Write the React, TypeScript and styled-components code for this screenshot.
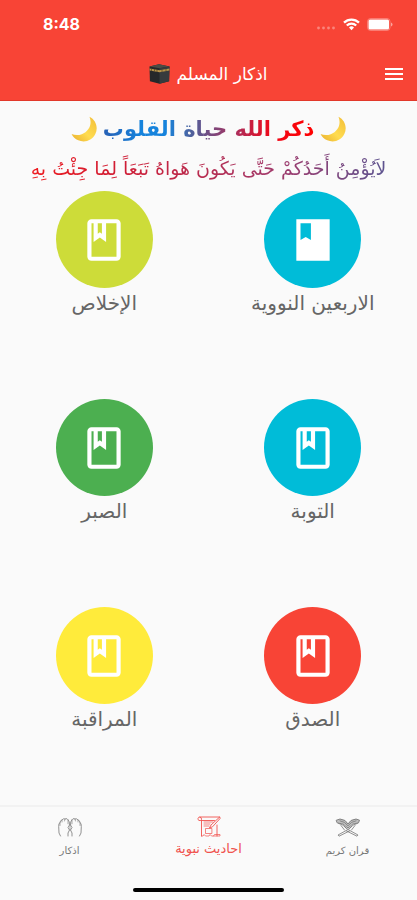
import React from 'react';
import styled, { createGlobalStyle } from 'styled-components';

const GlobalStyle = createGlobalStyle`
  *, *::before, *::after { box-sizing: border-box; }
  body {
    margin: 0;
    background: #fafafa;
    font-family: "DejaVu Sans", sans-serif;
  }
`;

const Screen = styled.div`
  display: flex;
  flex-direction: column;
  min-height: 100vh;
  background: #fafafa;
`;

const Header = styled.header`
  background: #f84436;
  border-bottom: 1px solid #e2382a;
  color: #fff;
`;

const StatusBar = styled.div`
  display: flex;
  align-items: center;
  justify-content: space-between;
  height: 48px;
  padding: 0 24px 0 43px;
`;

const Clock = styled.time`
  font: 700 16px/24px Inter, sans-serif;
`;

const StatusIcons = styled.div`
  display: flex;
  align-items: center;
  gap: 7px;
`;

const AppBar = styled.div`
  display: grid;
  grid-template-columns: 46px 1fr 46px;
  align-items: center;
  height: 52px;
`;

const AppTitle = styled.h1`
  grid-column: 2;
  display: flex;
  align-items: center;
  justify-content: center;
  gap: 6px;
  margin: 0;
  font-size: 17px;
  font-weight: 400;
  line-height: 28px;
  white-space: nowrap;
`;

const MenuButton = styled.button`
  display: grid;
  place-items: center;
  height: 48px;
  padding: 0;
  border: 0;
  background: none;
  color: inherit;
  cursor: pointer;
`;

const Content = styled.main`
  flex: 1;
  display: flex;
  flex-direction: column;
`;

const Slogan = styled.h2`
  display: flex;
  align-items: center;
  justify-content: center;
  gap: 6px;
  margin: 0;
  padding-top: 8px;
  font-size: 21px;
  line-height: 40px;
  white-space: nowrap;
`;

const GradientText = styled.span<{ $stops: string }>`
  display: inline-block;
  background: linear-gradient(to left, ${(p) => p.$stops});
  -webkit-background-clip: text;
  background-clip: text;
  color: transparent;
`;

const Verse = styled.p`
  display: flex;
  justify-content: center;
  margin: 0 0 4px;
  font-size: 19px;
  line-height: 38px;
  white-space: nowrap;
`;

const TopicGrid = styled.section`
  display: grid;
  grid-template-columns: 1fr 1fr;
  row-gap: 81px;
`;

const Topic = styled.button`
  display: flex;
  flex-direction: column;
  align-items: center;
  padding: 0;
  border: 0;
  background: none;
  color: #666;
  font: 400 20px/30px "DejaVu Sans", sans-serif;
  cursor: pointer;
`;

const Disc = styled.span<{ $color: string }>`
  display: grid;
  place-items: center;
  width: 97px;
  height: 97px;
  border-radius: 50%;
  background: ${(p) => p.$color};
  color: #fff;
`;

const BottomNav = styled.nav`
  display: grid;
  grid-template-columns: repeat(3, 1fr);
  height: 73px;
  border-top: 2px solid #f2f2f2;
`;

const Tab = styled.a<{ $active?: boolean }>`
  display: flex;
  flex-direction: column;
  align-items: center;
  padding-top: 8px;
  color: ${(p) => (p.$active ? '#f0524e' : '#777')};
  font-size: ${(p) => (p.$active ? 13 : 10)}px;
  line-height: 20px;
  text-decoration: none;
  white-space: nowrap;
`;

const HomeArea = styled.footer`
  display: flex;
  justify-content: center;
  height: 22px;
  padding-top: 10px;
`;

const HomeIndicator = styled.div`
  width: 36%;
  height: 4px;
  border-radius: 2px;
  background: #000;
`;

const Signal = () => (
  <svg width="20" height="14" viewBox="0 0 20 14" fill="#fff" opacity="0.35" aria-hidden="true">
    <circle cx="2.5" cy="11" r="1.4" />
    <circle cx="7.5" cy="11" r="1.4" />
    <circle cx="12.5" cy="11" r="1.4" />
    <circle cx="17.5" cy="11" r="1.4" />
  </svg>
);

const Wifi = () => (
  <svg width="17" height="13" viewBox="0 0 17 13" fill="none" stroke="#fff" strokeWidth="2.3" aria-hidden="true">
    <path d="M1 4.6a10.8 10.8 0 0 1 15 0" />
    <path d="M3.8 7.5a6.8 6.8 0 0 1 9.4 0" />
    <path d="M6 9.5a3.7 3.7 0 0 1 5 0L8.5 12.2z" fill="#fff" stroke="none" />
  </svg>
);

const Battery = () => (
  <svg width="26" height="13" viewBox="0 0 26 13" aria-hidden="true">
    <rect x="0.5" y="0.5" width="22.5" height="12" rx="3" fill="none" stroke="#fff" opacity="0.3" />
    <rect x="1.5" y="1.5" width="20.5" height="10" rx="1.5" fill="#fff" />
    <path d="M24 4.5q1.5.5 1.5 2t-1.5 2z" fill="#fff" opacity="0.5" />
  </svg>
);

const Kaaba = () => (
  <svg width="21" height="20" viewBox="0 0 21 20" aria-hidden="true">
    <path d="M.5 2.6L10 .3l10.500 2.300-.4 14.600-9.600 2.500L.9 17.200z" fill="#25282a" />
    <path d="M.5 2.6L10 .3l10.500 2.300-10 1.600z" fill="#4b4d45" />
    <path d="M10.500 4.200l10-1.600-.4 14.600-9.600 2.500z" fill="#373b3d" />
    <path d="M.6 4.600l9.900 1.600 9.900-1.600v1.900l-9.900 1.700L.6 6.500z" fill="#b8954a" />
    <path d="M2.500 4.500V7M5.500 5v2.500M8 5.500V8M13 5.500V8M17 4.700v2.500" stroke="#514226" strokeWidth=".7" />
  </svg>
);

const Menu = () => (
  <svg width="18" height="12" viewBox="0 0 18 12" fill="#fff" aria-hidden="true">
    <path d="M0 0h18v2H0zM0 5h18v2H0zM0 10h18v2H0z" />
  </svg>
);

const Moon = () => (
  <svg width="26" height="26" viewBox="0 0 26 26" aria-hidden="true">
    <defs>
      <linearGradient id="moonFill" x1="0" y1="1" x2="1" y2="0">
        <stop offset="0" stopColor="#e9ae2c" />
        <stop offset=".45" stopColor="#ffdc50" />
        <stop offset="1" stopColor="#f2bd37" />
      </linearGradient>
    </defs>
    <path
      d="M18.500.7C25 4 27.500 11.500 24.300 18 21 24.700 13.500 27 7.300 24.300 4.200 23 1.800 20.700.6 18c3 1.200 6.500 1.600 10.200.2C18 15.500 21.500 8 18.500.7z"
      fill="url(#moonFill)"
    />
  </svg>
);

const BOOK_OUTLINE =
  'M18 2H6c-1.1 0-2 .9-2 2v16c0 1.1.9 2 2 2h12c1.1 0 2-.9 2-2V4c0-1.1-.9-2-2-2zM9 4h2v5l-1-.75L9 9V4zm9 16H6V4h1v9l3-2.25L13 13V4h5v16z';
const BOOK_SOLID = 'M20 2H4v20h16V2zM6 4h5v8l-2.5-1.5L6 12V4z';

const Book = ({ solid }: { solid?: boolean }) => (
  <svg width="50" height="50" viewBox="0 0 24 24" fill="currentColor" aria-hidden="true">
    <path d={solid ? BOOK_SOLID : BOOK_OUTLINE} />
  </svg>
);

const Hands = () => (
  <svg width="26" height="26" viewBox="0 0 26 26" fill="none" stroke="currentColor" strokeWidth="0.8" strokeLinecap="round" strokeLinejoin="round" aria-hidden="true">
    <path d="M3.500 21L2 18l-.3-6.500Q1.500 8.500 3 7.500 3.300 5.300 5 5q1.300-1.800 3-1 2.300-1 3 .8 1.800 1.700 1.500 5.200l-1.500 2.500 1.500 2.500-1.500 3V21" />
    <path d="M22.500 21l1.500-3 .3-6.500q.2-3-1.300-4Q22.700 5.300 21 5q-1.300-1.800-3-1-2.300-1-3 .8-1.800 1.700-1.500 5.200l1.500 2.500-1.500 2.500 1.500 3V21" />
    <path d="M3 7.500v3M5 5v2M8 4l-.5 2M11 4.800v4M23 7.500v3M21 5v2M18 4l.5 2M15 4.800v4M13 10v5" strokeWidth="0.6" />
  </svg>
);

const Scroll = () => (
  <svg width="24" height="24" viewBox="0 0 24 24" fill="none" stroke="currentColor" strokeWidth="0.9" strokeLinecap="round" strokeLinejoin="round" aria-hidden="true">
    <path d="M3.500 5.500H2Q.8 5 1 3.500 1.300 2 3 2h19.500M3 2q1.800.5 1.500 2.300V21M4.500 5.500h13M20 10v11" />
    <path d="M22.500 2.200L14 10l-1.500 3 3-1.200 7.300-8z" />
    <path d="M7 7h9M7 9h6M7 11h5M14.500 13.500h-6v5h6zM4.500 21H6l1-1.500L8.500 21H12l1-1.500 1.500 1.500H23v-1.500h-5.500l-1 1.500" strokeWidth="0.7" />
  </svg>
);

const Quran = () => (
  <svg width="26" height="26" viewBox="0 0 26 26" fill="none" stroke="currentColor" strokeLinecap="round" strokeLinejoin="round" aria-hidden="true">
    <path d="M1.500 5.200L5 4q6 .5 8 5 2-4.500 8-5l3.500 1.200-1 2.600q-6-.2-10.500 5.200Q8.500 7.600 2.500 7.800z" fill="currentColor" fillOpacity=".45" strokeWidth="0.9" />
    <path d="M3.500 8.300q5 1 8 5.200M22.500 8.300q-5 1-8 5.200M5 5.800q5 .7 8 5 3-4.300 8-5" strokeWidth=".8" />
    <path d="M9.500 11.500l3.500 3 10 5.500-1 1.200L11.500 16M16.500 11.500l-3.500 3L3 20l1 1.200L14.500 16" strokeWidth="0.8" />
    <path d="M6 10.500l3.500 4.500M20 10.500L16.500 15" strokeWidth=".8" />
  </svg>
);

const topics = [
  { label: 'الاربعين النووية', color: '#00bcd8', solid: true },
  { label: 'الإخلاص', color: '#cddc39' },
  { label: 'التوبة', color: '#00bcd8' },
  { label: 'الصبر', color: '#4caf50' },
  { label: 'الصدق', color: '#f84436' },
  { label: 'المراقبة', color: '#ffeb3b' },
];

const tabs = [
  { label: 'قران كريم', icon: <Quran /> },
  { label: 'احاديث نبوية', icon: <Scroll />, active: true },
  { label: 'اذكار', icon: <Hands /> },
];

export default function App() {
  return (
    <Screen dir="rtl" lang="ar">
      <GlobalStyle />
      <Header>
        <StatusBar dir="ltr">
          <Clock>8:48</Clock>
          <StatusIcons>
            <Signal />
            <Wifi />
            <Battery />
          </StatusIcons>
        </StatusBar>
        <AppBar>
          <MenuButton type="button" aria-label="القائمة">
            <Menu />
          </MenuButton>
          <AppTitle>
            <span>اذكار المسلم</span>
            <Kaaba />
          </AppTitle>
        </AppBar>
      </Header>
      <Content>
        <Slogan>
          <Moon />
          <GradientText $stops="#ff0000 0%, #f00818 20%, #b02c58 36%, #4f609c 58%, #1683dc 70%, #1683dc 82%, #2860b4 100%">
            ذكر الله حياة القلوب
          </GradientText>
          <Moon />
        </Slogan>
        <Verse>
          <GradientText $stops="#5d5490 0%, #a03a6c 30%, #b82c50 52%, #d01c34 75%, #ee1c20 100%">
            لاَيُؤْمِنُ أَحَدُكُمْ حَتَّى يَكُونَ هَواهُ تَبَعَاً لِمَا جِئْتُ بِهِ
          </GradientText>
        </Verse>
        <TopicGrid>
          {topics.map((topic) => (
            <Topic type="button" key={topic.label}>
              <Disc $color={topic.color}>
                <Book solid={topic.solid} />
              </Disc>
              {topic.label}
            </Topic>
          ))}
        </TopicGrid>
      </Content>
      <BottomNav>
        {tabs.map((tab) => (
          <Tab href="#" key={tab.label} $active={tab.active} aria-current={tab.active ? 'page' : undefined}>
            {tab.icon}
            <span>{tab.label}</span>
          </Tab>
        ))}
      </BottomNav>
      <HomeArea>
        <HomeIndicator />
      </HomeArea>
    </Screen>
  );
}
